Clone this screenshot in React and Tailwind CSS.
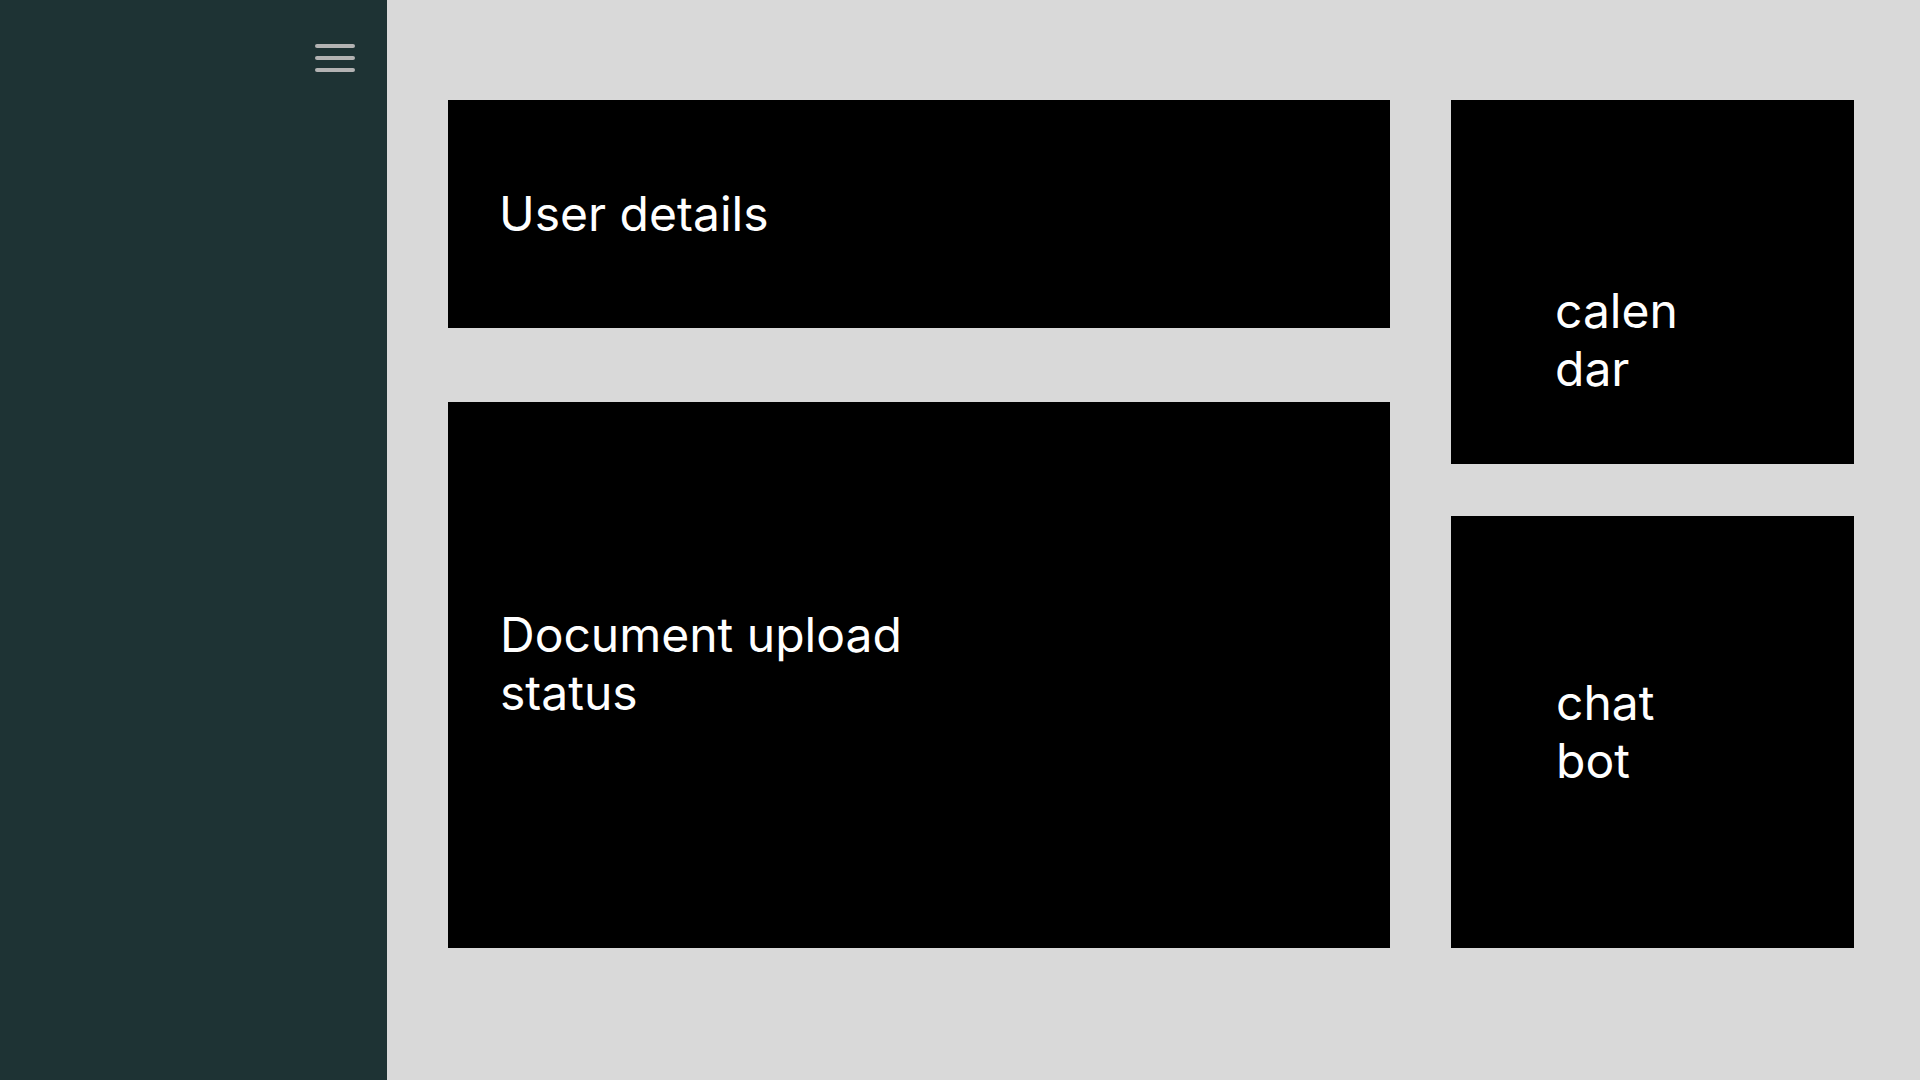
export default function App() {
  const Bars = () => (
    <div className="flex flex-col gap-2">
      <div className="h-1 w-10 rounded-sm bg-[#b3b3b3]"></div>
      <div className="h-1 w-10 rounded-sm bg-[#b3b3b3]"></div>
      <div className="h-1 w-10 rounded-sm bg-[#b3b3b3]"></div>
    </div>
  )

  const Card = ({ className, children }) => (
    <div className={"bg-black text-white text-5xl leading-[1.2] font-normal " + className}>
      {children}
    </div>
  )

  return (
    <div
      className="flex h-[1080px] w-[1920px] overflow-hidden bg-[#d9d9d9]"
      style={{ fontFamily: "Inter, 'Noto Sans', sans-serif" }}
    >
      <aside className="flex w-[387px] shrink-0 justify-end bg-[#1e3334] pt-[44px] pr-[32px]">
        <Bars />
      </aside>
      <main className="flex gap-[61px] pt-[100px] pl-[61px]">
        <div className="flex w-[942px] flex-col gap-[74px]">
          <Card className="flex h-[228px] items-center pl-[51px]">
            <p>User details</p>
          </Card>
          <Card className="h-[546px] pt-[204px] pl-[52px]">
            <p>Document upload</p>
            <p>status</p>
          </Card>
        </div>
        <div className="flex w-[403px] flex-col gap-[52px]">
          <Card className="h-[364px] pt-[182px] pl-[104px]">
            <p>calen</p>
            <p>dar</p>
          </Card>
          <Card className="flex h-[432px] flex-col justify-center pl-[105px]">
            <p>chat</p>
            <p>bot</p>
          </Card>
        </div>
      </main>
    </div>
  )
}
